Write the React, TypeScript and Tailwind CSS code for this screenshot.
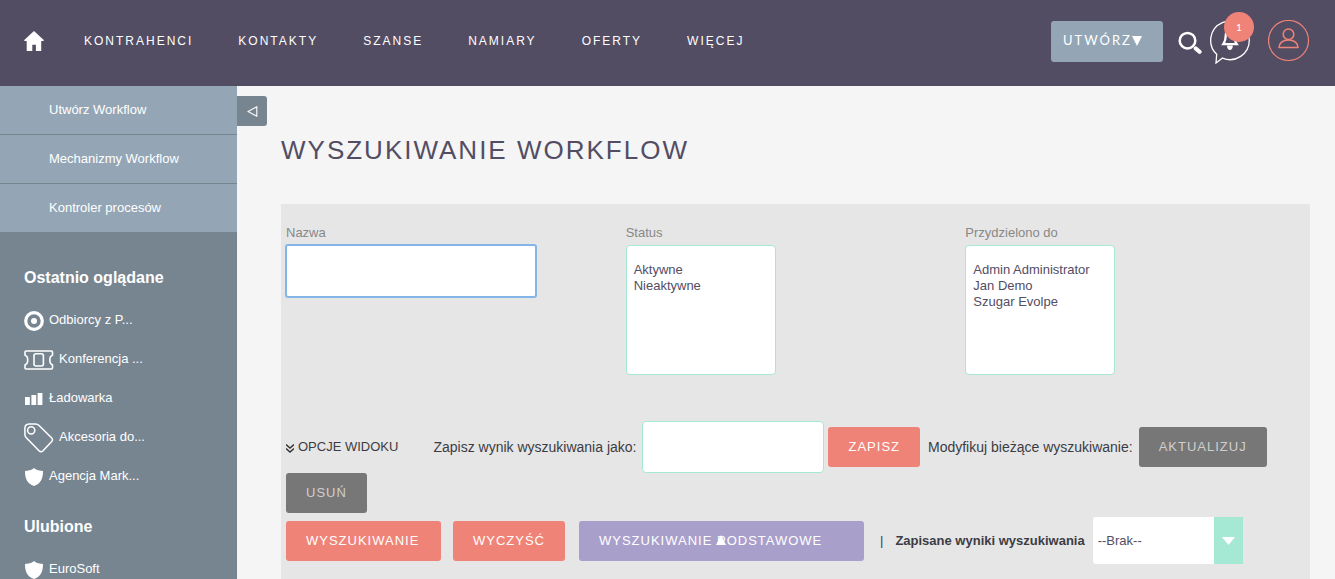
import type { ReactNode } from "react";

const navLinks = ["Kontrahenci", "Kontakty", "Szanse", "Namiary", "Oferty", "Więcej"];
const actionLinks = ["Utwórz Workflow", "Mechanizmy Workflow", "Kontroler procesów"];

function HomeIcon() {
  return (
    <svg width="20" height="20" viewBox="0 0 20 20" fill="#fff" aria-hidden="true">
      <path d="M10 0L0 9.2l.7.9h2v9.9h5.6v-6.300h3.600V20h5.300v-9.900h2l.8-.9z" />
    </svg>
  );
}

function SearchIcon() {
  return (
    <svg width="24" height="24" viewBox="0 0 24 24" fill="none" stroke="#fff" aria-hidden="true">
      <circle cx="9.500" cy="9.700" r="7.800" strokeWidth="2.500" />
      <path d="M17.800 17.500l3.700 3.300" strokeWidth="4.200" strokeLinecap="round" />
    </svg>
  );
}

function BellBubbleIcon() {
  return (
    <svg width="40" height="44" viewBox="0 0 40 44" fill="none" aria-hidden="true">
      <path
        d="M6.700 34.300A19.300 19.300 0 1 1 12.500 38.100L6 43z"
        stroke="#fff"
        strokeWidth="1.300"
      />
      <path
        d="M20 8c-3.300 0-4.200 3-4.200 6.500 0 4.500-.4 6.500-2.600 9.700h13.600c-2.200-3.200-2.600-5.200-2.600-9.700C24.200 11 23.300 8 20 8z"
        fill="#534d64"
        stroke="#fff"
        strokeWidth="2.200"
      />
      <path d="M17 25.500h5.800c0 2.900-1.200 4.500-2.900 4.500S17 28.400 17 25.500z" fill="#fff" />
    </svg>
  );
}

function UserIcon() {
  return (
    <svg width="42" height="42" viewBox="0 0 42 42" fill="none" stroke="#f08377" aria-hidden="true">
      <circle cx="20.500" cy="20.500" r="20" strokeWidth="1.200" />
      <circle cx="20.500" cy="14.200" r="5.300" strokeWidth="1.500" />
      <path d="M11 27.600c0-4.500 3.600-7.700 9.500-7.700s9.500 3.200 9.500 7.700z" strokeWidth="1.500" strokeLinejoin="round" />
    </svg>
  );
}

function TargetIcon() {
  return (
    <svg width="20" height="20" viewBox="0 0 20 20" aria-hidden="true">
      <circle cx="10" cy="10" r="8.300" fill="none" stroke="#fff" strokeWidth="3.200" />
      <circle cx="10" cy="10" r="3" fill="#fff" />
    </svg>
  );
}

function TicketIcon() {
  return (
    <svg width="30" height="20" viewBox="0 0 30 20" fill="none" stroke="#fff" strokeWidth="1.600" aria-hidden="true">
      <path d="M2 1h25.500q1 0 1 1v3c-1.600 1-2.600 2-2.600 3.300v3.400c0 1.300 1 2.300 2.600 3.300v3q0 1-1 1H2q-1 0-1-1v-3c1.600-1 2.600-2 2.600-3.300V8.300C3.600 7 2.600 6 1 5V2q0-1 1-1z" strokeLinejoin="round" />
      <rect x="10" y="3.800" width="9.400" height="12.200" rx="2" />
    </svg>
  );
}

function BarsIcon() {
  return (
    <svg width="20" height="20" viewBox="0 0 20 20" fill="#fff" aria-hidden="true">
      <path d="M1 8h4.800v8H1zM7.400 6h4.800v10H7.400zM13.600 4h4.800v12h-4.800z" />
    </svg>
  );
}

function TagIcon() {
  return (
    <svg width="30" height="30" viewBox="0 0 30 30" fill="none" stroke="#fff" strokeWidth="1.500" aria-hidden="true">
      <path d="M5 1h6.500q2 0 3.300 1.300L27.500 14.800q2 2 0 4L19 27.800q-2 2-4 0L2.300 14.800Q.9 13.200.9 11.500V5Q1 1.200 5 1z" />
      <circle cx="7.200" cy="7.300" r="3.600" />
    </svg>
  );
}

function ShieldIcon() {
  return (
    <svg width="20" height="20" viewBox="0 0 20 20" fill="#fff" aria-hidden="true">
      <path d="M10 1l2 1.500c2 .8 4.500 1.400 7 1.500 0 8-2.200 12.500-9 15C3.200 16.500 1 12 1 4c2.500-.1 5-.7 7-1.500z" />
    </svg>
  );
}

function SideItem({ icon, children }: { icon: ReactNode; children: ReactNode }) {
  return (
    <li>
      <a href="#" className="flex h-[39px] items-center gap-[5px] pl-6 text-[13px]">
        <span className="flex pt-0.5">{icon}</span>
        {children}
      </a>
    </li>
  );
}

const buttonBase = "h-10 rounded-[3px] px-5 text-[13px] tracking-[1px] uppercase";
const coral = `${buttonBase} bg-[#f08377] text-white`;
const grey = `${buttonBase} bg-[#777777] text-[#cfcfcf]`;
const listBox =
  "h-[130px] w-[150px] overflow-hidden rounded-sm border border-[#a5e8d3] bg-white px-[7px] py-4 text-[13px] leading-4 text-[#534d64] [&>option]:h-4";
const fieldLabel = "text-[13px] leading-4 text-[#888888]";

export default function App() {
  return (
    <div className="flex min-h-screen flex-col bg-[#f5f5f5] font-['Liberation_Sans',Arial,sans-serif] text-[#3c3c44]">
      <header className="flex h-[86px] items-center justify-between bg-[#534d64] pr-[25px] pb-1 pl-6">
        <div className="flex items-center gap-10">
          <a href="#" aria-label="Start">
            <HomeIcon />
          </a>
          <nav className="flex items-center gap-[45px]">
            {navLinks.map((label) => (
              <a key={label} href="#" className="text-xs tracking-[2px] text-white uppercase">
                {label}
              </a>
            ))}
          </nav>
        </div>
        <div className="flex items-center">
          <button className="flex h-[41px] w-28 items-center rounded-[3px] bg-[#94a6b5] pl-3 font-[Lato,sans-serif] text-[13px] tracking-[2px] text-white uppercase">
            Utwórz
            <svg width="10" height="10" viewBox="0 0 10 10" fill="#fff" aria-hidden="true">
              <path d="M0 0h10L5 10z" />
            </svg>
          </button>
          <button aria-label="Szukaj" className="ml-[15px] pt-1">
            <SearchIcon />
          </button>
          <button aria-label="Powiadomienia" className="relative ml-2 pt-0.5">
            <BellBubbleIcon />
            <span className="absolute -top-1.5 left-3.5 flex size-[30px] items-center justify-center rounded-full bg-[#f08377] font-[Lato,sans-serif] text-[10px] text-white">
              1
            </span>
          </button>
          <button aria-label="Konto" className="ml-[18px]">
            <UserIcon />
          </button>
        </div>
      </header>

      <div className="flex flex-1">
        <aside className="h-[493px] w-[237px] shrink-0 overflow-hidden bg-[#778591] text-white">
          <ul className="text-[13px]">
            {actionLinks.map((label) => (
              <li key={label} className="border-b border-[#778591] bg-[#94a6b5]">
                <a href="#" className="flex h-12 items-center pl-[49px]">
                  {label}
                </a>
              </li>
            ))}
          </ul>
          <h2 className="pt-[35px] pb-3 pl-6 text-base leading-5 font-bold">Ostatnio oglądane</h2>
          <ul>
            <SideItem icon={<TargetIcon />}>Odbiorcy z P...</SideItem>
            <SideItem icon={<TicketIcon />}>Konferencja ...</SideItem>
            <SideItem icon={<BarsIcon />}>Ładowarka</SideItem>
            <SideItem icon={<TagIcon />}>Akcesoria do...</SideItem>
            <SideItem icon={<ShieldIcon />}>Agencja Mark...</SideItem>
          </ul>
          <h2 className="pt-[22px] pb-3 pl-6 text-base leading-5 font-bold">Ulubione</h2>
          <ul>
            <SideItem icon={<ShieldIcon />}>EuroSoft</SideItem>
          </ul>
        </aside>

        <main className="flex min-w-0 flex-1 flex-col pt-2.5">
          <button
            aria-label="Zwiń panel"
            className="flex size-[30px] items-center justify-center rounded-r-[3px] bg-[#778591]"
          >
            <svg width="11" height="11" viewBox="0 0 11 11" fill="none" stroke="#fff" strokeWidth="1.100" aria-hidden="true">
              <path d="M9.800.8v9.400L1 5.500z" />
            </svg>
          </button>
          <h1 className="mt-2 ml-11 text-[26px] leading-8 tracking-[2px] text-[#534d64] uppercase">
            Wyszukiwanie Workflow
          </h1>

          <form
            className="mt-[38px] mr-[25px] ml-11 flex flex-1 flex-col bg-[#e6e6e6] px-[5px] pt-[21px]"
            onSubmit={(e) => e.preventDefault()}
          >
            <div className="grid grid-cols-3">
              <div className="flex flex-col items-start gap-1">
                <label htmlFor="name" className={fieldLabel}>Nazwa</label>
                <input
                  id="name"
                  className="h-[52px] w-[250px] rounded-[2px] border border-[#84b5e8] bg-white px-2 text-[13px] ring-1 ring-[#84b5e8] outline-none"
                />
              </div>
              <div className="flex flex-col items-start gap-1">
                <label htmlFor="status" className={fieldLabel}>Status</label>
                <select id="status" multiple className={listBox}>
                  <option>Aktywne</option>
                  <option>Nieaktywne</option>
                </select>
              </div>
              <div className="flex flex-col items-start gap-1">
                <label htmlFor="assigned" className={fieldLabel}>Przydzielono do</label>
                <select id="assigned" multiple className={listBox}>
                  <option>Admin Administrator</option>
                  <option>Jan Demo</option>
                  <option>Szugar Evolpe</option>
                </select>
              </div>
            </div>

            <div className="mt-[46px] flex flex-wrap items-center text-sm">
              <button type="button" className="mr-[35px] flex items-center gap-1 text-[13px]">
                <svg width="8" height="9" viewBox="0 0 8 9" fill="none" stroke="#333" strokeWidth="1.400" className="mt-0.5" aria-hidden="true">
                  <path d="M0 .5l4 3.500 4-3.500M0 4.500L4 8l4-3.500" />
                </svg>
                OPCJE WIDOKU
              </button>
              <label htmlFor="save-as" className="mr-1.5">Zapisz wynik wyszukiwania jako:</label>
              <input
                id="save-as"
                className="mr-1 h-[52px] w-[182px] rounded-sm border border-[#a5e8d3] bg-white px-2 outline-none"
              />
              <button type="button" className={`${coral} mr-2`}>Zapisz</button>
              <span className="mr-1.5">Modyfikuj bieżące wyszukiwanie:</span>
              <button type="button" className={`${grey} mr-1`}>Aktualizuj</button>
              <button type="button" className={grey}>Usuń</button>
            </div>

            <div className="mt-1 flex items-center text-[13px]">
              <button type="submit" className={`${coral} mr-3 w-[155px] text-left`}>Wyszukiwanie</button>
              <button type="reset" className={`${coral} mr-3.5`}>Wyczyść</button>
              <button
                type="button"
                className="relative h-10 w-[285px] rounded-[3px] bg-[#a99fcb] px-5 text-left text-[13px] tracking-[1px] text-white uppercase"
              >
                Wyszukiwanie Podstawowe
                <svg width="10" height="10" viewBox="0 0 10 10" fill="#fff" className="absolute top-3.5 left-[137px]" aria-hidden="true">
                  <path d="M5 0l5 10H0z" />
                </svg>
              </button>
              <span className="mr-3 ml-4">|</span>
              <label htmlFor="saved" className="mr-2 font-bold">Zapisane wyniki wyszukiwania</label>
              <div className="relative">
                <select
                  id="saved"
                  className="block h-[47px] w-[150px] appearance-none rounded-[3px] bg-white pl-[5px] text-[13px] text-[#534d64]"
                >
                  <option>--Brak--</option>
                </select>
                <span className="pointer-events-none absolute inset-y-0 right-0 flex w-[29px] items-center justify-center bg-[#a5e8d3]">
                  <svg width="13" height="8" viewBox="0 0 13 8" fill="#fff" aria-hidden="true">
                    <path d="M0 0h13L6.500 8z" />
                  </svg>
                </span>
              </div>
            </div>
          </form>
        </main>
      </div>
    </div>
  );
}
